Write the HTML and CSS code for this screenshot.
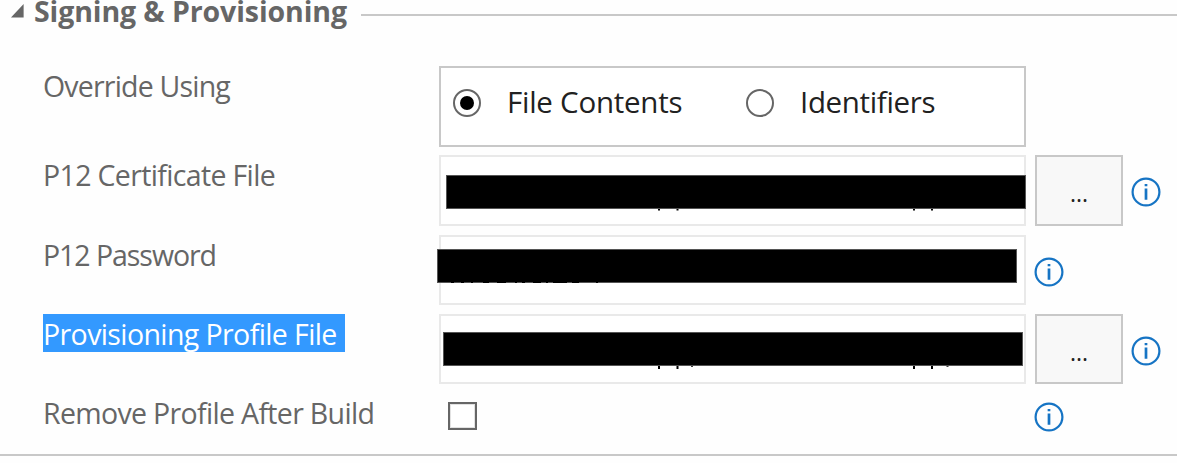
FILE: index.html
```html
<!DOCTYPE html>
<html lang="en">
<head>
<meta charset="utf-8">
<title>Signing &amp; Provisioning</title>
<link rel="stylesheet" href="styles.css">
</head>
<body>
<svg class="defs" aria-hidden="true">
  <symbol id="info" viewBox="0 0 30 30">
    <circle cx="15" cy="15" r="13.4" fill="none" stroke="#1674c4" stroke-width="2.2"/>
    <path d="M15 11.6V22.8M15 7.1v2.2" fill="none" stroke="#1674c4" stroke-width="2.7"/>
  </symbol>
</svg>
<section class="panel">
  <header class="heading">
    <svg class="caret" viewBox="0 0 14 14"><path d="M12.6 0V13.6H0Z" fill="#666"/></svg>
    <h2 class="title">Signing &amp; Provisioning</h2>
    <span class="rule"></span>
  </header>
  <div class="row row-options">
    <div class="label"><span class="text override">Override Using</span></div>
    <div class="box options">
      <span class="radio checked"></span><span class="option contents">File Contents</span>
      <span class="radio"></span><span class="option identifiers">Identifiers</span>
    </div>
  </div>
  <div class="row row-cert">
    <div class="label"><span class="text certificate">P12 Certificate File</span></div>
    <div class="box field">
      <span class="mask mask-cert"></span>
      <svg class="marks marks-cert" viewBox="0 0 300 4"><path d="M2 0h2v1.4h-2zM20.500 0h2v1.400h-2zM257 0h2v1.400h-2zM275 0h2v1.400h-2z"/></svg>
    </div>
    <div class="browse">...</div>
    <svg class="info"><use href="#info"/></svg>
  </div>
  <div class="row row-password">
    <div class="label"><span class="text password">P12 Password</span></div>
    <div class="box field">
      <span class="mask mask-password"></span>
      <svg class="marks marks-password" viewBox="0 0 150 2"><path d="M0 0h3v1H0zM10 0h3v1h-3zM20 0h2v1h-2zM32 0h6v1h-6zM46 0h9v1h-9zM64 0h2v1h-2zM71 0h3v1h-3zM82 0h8v1h-8zM95 0h2v1h-2zM102 0h14v1h-14zM121 0h7v1h-7zM145 0h2v1h-2z"/></svg>
    </div>
    <svg class="info"><use href="#info"/></svg>
  </div>
  <div class="row row-profile">
    <div class="label"><span class="text selected">Provisioning Profile File</span></div>
    <div class="box field">
      <span class="mask mask-profile"></span>
      <svg class="marks marks-profile" viewBox="0 0 300 4"><path d="M2 0h2v3h-2zM20.500 0h2v3h-2zM35 0h2v.8h-2zM257 0h2v3h-2zM275 0h2v3h-2zM290.500 0h2v.8h-2z"/></svg>
    </div>
    <div class="browse">...</div>
    <svg class="info"><use href="#info"/></svg>
  </div>
  <div class="row row-remove">
    <div class="label"><span class="text remove">Remove Profile After Build</span></div>
    <div class="check-cell"><span class="checkbox"></span></div>
    <svg class="info"><use href="#info"/></svg>
  </div>
</section>
</body>
</html>
```

FILE: styles.css
```css
* { box-sizing: border-box; }
body { margin: 0; background: #fefefe; overflow: hidden; font-family: "Open Sans", "Noto Sans", sans-serif; font-size: 28.5px; color: #666; }
.defs { display: block; width: 0; height: 0; }
.panel { height: 456px; border-bottom: 2px solid #c8c8c8; }
.heading { display: flex; height: 66px; padding-left: 11px; }
.caret { width: 14px; height: 14px; margin-top: 4px; flex: none; }
.title { margin: 0 0 0 9px; width: 327px; flex: none; font-size: 28.5px; line-height: 23px; font-weight: 700; letter-spacing: -.1px; white-space: nowrap; }
.rule { flex: 1; height: 2px; margin-top: 14px; background: #c8c8c8; }
.row { display: grid; grid-template-columns: 396px 587px auto auto 1fr; padding-left: 43px; align-items: start; }
.row-options { height: 89px; }
.row-cert { height: 80px; }
.row-password { height: 79px; }
.row-profile { height: 83px; }
.row-remove { height: 57px; }
.label { white-space: nowrap; line-height: 38px; }
.text { display: inline-block; height: 38px; vertical-align: top; }
.box { position: relative; border: 2px solid #c8c8c8; background: #fff; }
.options { display: flex; align-items: center; height: 81px; padding: 0 0 8px 12px; }
.field { border-color: #e9e9e9; height: 70px; }
.row-cert .field, .row-cert .browse { height: 71px; }
.radio { display: flex; flex: none; align-items: center; justify-content: center; width: 28px; height: 28px; border: 2px solid #666; border-radius: 50%; }
.checked::after { content: ""; width: 14px; height: 14px; border-radius: 50%; background: #000; }
.option { color: #212121; white-space: nowrap; font-size: 29.5px; line-height: 36px; padding-bottom: 2px; letter-spacing: -.25px; }
.contents { margin-left: 26px; width: 239px; }
.identifiers { margin-left: 26px; letter-spacing: -.35px; }
.browse { width: 88px; height: 70px; margin-left: 9px; border: 2px solid #c8c8c8; background: #f8f8f8; color: #212121; font-size: 23px; line-height: 72px; text-align: center; }
.info { width: 30px; height: 30px; margin: 22px 0 0 8px; }
.row-remove .info { margin-top: 5px; }
.checkbox { display: block; width: 29px; height: 28px; margin: 5px 0 0 9px; border: 2px solid #666; background: #fff; box-shadow: inset 0 0 0 1px #e2e2e2; }
.mask { position: absolute; width: 580px; height: 34px; background: #000; border: 1px solid #555; }
.mask-cert { left: 5px; top: 18px; }
.mask-password { left: -4px; top: 12px; }
.mask-profile { left: 2px; top: 16px; }
.marks { position: absolute; fill: #000; }
.marks-cert, .marks-profile { left: 215px; width: 300px; height: 4px; }
.marks-cert { top: 52px; }
.marks-profile { top: 50px; }
.marks-password { left: 10px; top: 45px; width: 150px; height: 2px; }
.override { margin-top: 1px; letter-spacing: -.8px; }
.certificate { margin-top: 1px; letter-spacing: -.65px; }
.password { margin-top: 1px; letter-spacing: -1.05px; }
.selected { width: 302px; line-height: 40px; background: #3399ff; color: #fff; letter-spacing: -.6px; }
.remove { margin-top: -3px; letter-spacing: -.67px; }
```
